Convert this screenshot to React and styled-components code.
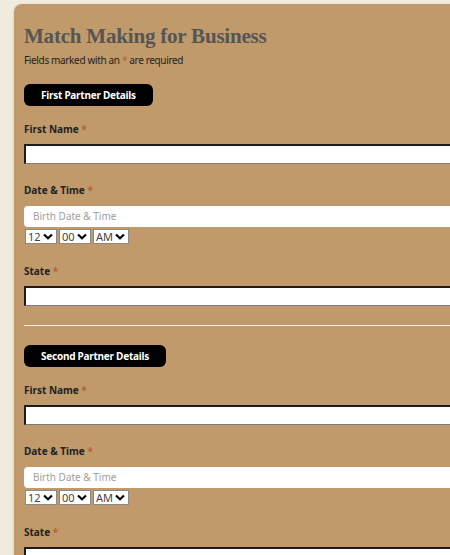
import React from "react";
import styled, { createGlobalStyle } from "styled-components";

const Global = createGlobalStyle`
  html, body { margin: 0; padding: 0; }
  body {
    background: #efecdf;
    overflow: hidden;
    font-family: "Noto Sans", "Open Sans", sans-serif;
  }
`;

const Page = styled.div`
  padding: 4px 0 0 14px;
  width: 600px;
`;

const Card = styled.div`
  background: #c09a6a;
  border-radius: 8px 0 0 0;
  padding: 19px 10px 40px 10px;
  min-height: 560px;
  box-shadow: -1px 0 2px rgba(0,0,0,0.08);
`;

const Title = styled.h1`
  margin: 0;
  font-family: "Liberation Serif", "DejaVu Serif", serif;
  font-weight: bold;
  font-size: 21px;
  letter-spacing: -0.2px;
  line-height: 26px;
  color: #555555;
`;

const Note = styled.p`
  margin: 4px 0 0 0;
  font-size: 10px;
  letter-spacing: -0.35px;
  line-height: 14px;
  color: #222;
`;

const Star = styled.span`
  color: #b0603f;
`;

const SectionButton = styled.div`
  display: inline-block;
  background: #000;
  color: #fff;
  font-weight: bold;
  font-size: 10px;
  letter-spacing: -0.25px;
  line-height: 22px;
  height: 22px;
  padding: 0 17px;
  border-radius: 6px;
  margin-top: ${(p) => p.$mt}px;
`;

const Field = styled.div`
  margin-top: ${(p) => p.$mt}px;
`;

const Label = styled.div`
  font-size: 10px;
  line-height: 14px;
  font-weight: bold;
  color: #222;
  margin-bottom: ${(p) => p.$mb}px;
`;

const TextInput = styled.div`
  height: 20px;
  box-sizing: border-box;
  background: #fff;
  border-top: 2px solid #1c1c1c;
  border-left: 2px solid #1c1c1c;
  border-bottom: 1px solid #7a7a7a;
`;

const DateInput = styled.div`
  height: 21px;
  box-sizing: border-box;
  background: #fff;
  border-radius: 4px 0 0 4px;
  padding-left: 9px;
  font-size: 10px;
  line-height: 21px;
  color: #a0a0a0;
`;

const SelectRow = styled.div`
  display: flex;
  gap: 2px;
  margin-top: 2px;
  margin-left: 1px;
`;

const SelectBox = styled.div`
  display: flex;
  align-items: center;
  justify-content: space-between;
  box-sizing: border-box;
  width: ${(p) => p.$w}px;
  height: 15px;
  background: #fff;
  border: 1px solid #8a8a8a;
  padding: 0 3px 0 2px;
  font-size: 11px;
  color: #444;
  line-height: 13px;
`;

const Rule = styled.div`
  height: 1px;
  background: #f3ece2;
  margin-top: 19px;
`;

const Chevron = () => (
  <svg width="10" height="7" viewBox="0 0 10 7">
    <path d="M1 1.5 L5 5.2 L9 1.5" fill="none" stroke="#000" strokeWidth="2.2" />
  </svg>
);

const Select = ({ value, w }) => (
  <SelectBox $w={w}>
    <span>{value}</span>
    <Chevron />
  </SelectBox>
);

const Partner = ({ title, btnTop }) => (
  <>
    <SectionButton $mt={btnTop}>{title}</SectionButton>
    <Field $mt={16}>
      <Label $mb={8}>
        First Name <Star>*</Star>
      </Label>
      <TextInput />
    </Field>
    <Field $mt={19}>
      <Label $mb={9}>
        Date &amp; Time <Star>*</Star>
      </Label>
      <DateInput>Birth Date &amp; Time</DateInput>
      <SelectRow>
        <Select value="12" w={32} />
        <Select value="00" w={32} />
        <Select value="AM" w={36} />
      </SelectRow>
    </Field>
    <Field $mt={20}>
      <Label $mb={8}>
        State <Star>*</Star>
      </Label>
      <TextInput />
    </Field>
  </>
);

export default function App() {
  return (
    <Page>
      <Global />
      <Card>
        <Title>Match Making for Business</Title>
        <Note>
          Fields marked with an <Star>*</Star> are required
        </Note>
        <Partner title="First Partner Details" btnTop={17} />
        <Rule />
        <Partner title="Second Partner Details" btnTop={19} />
      </Card>
    </Page>
  );
}
